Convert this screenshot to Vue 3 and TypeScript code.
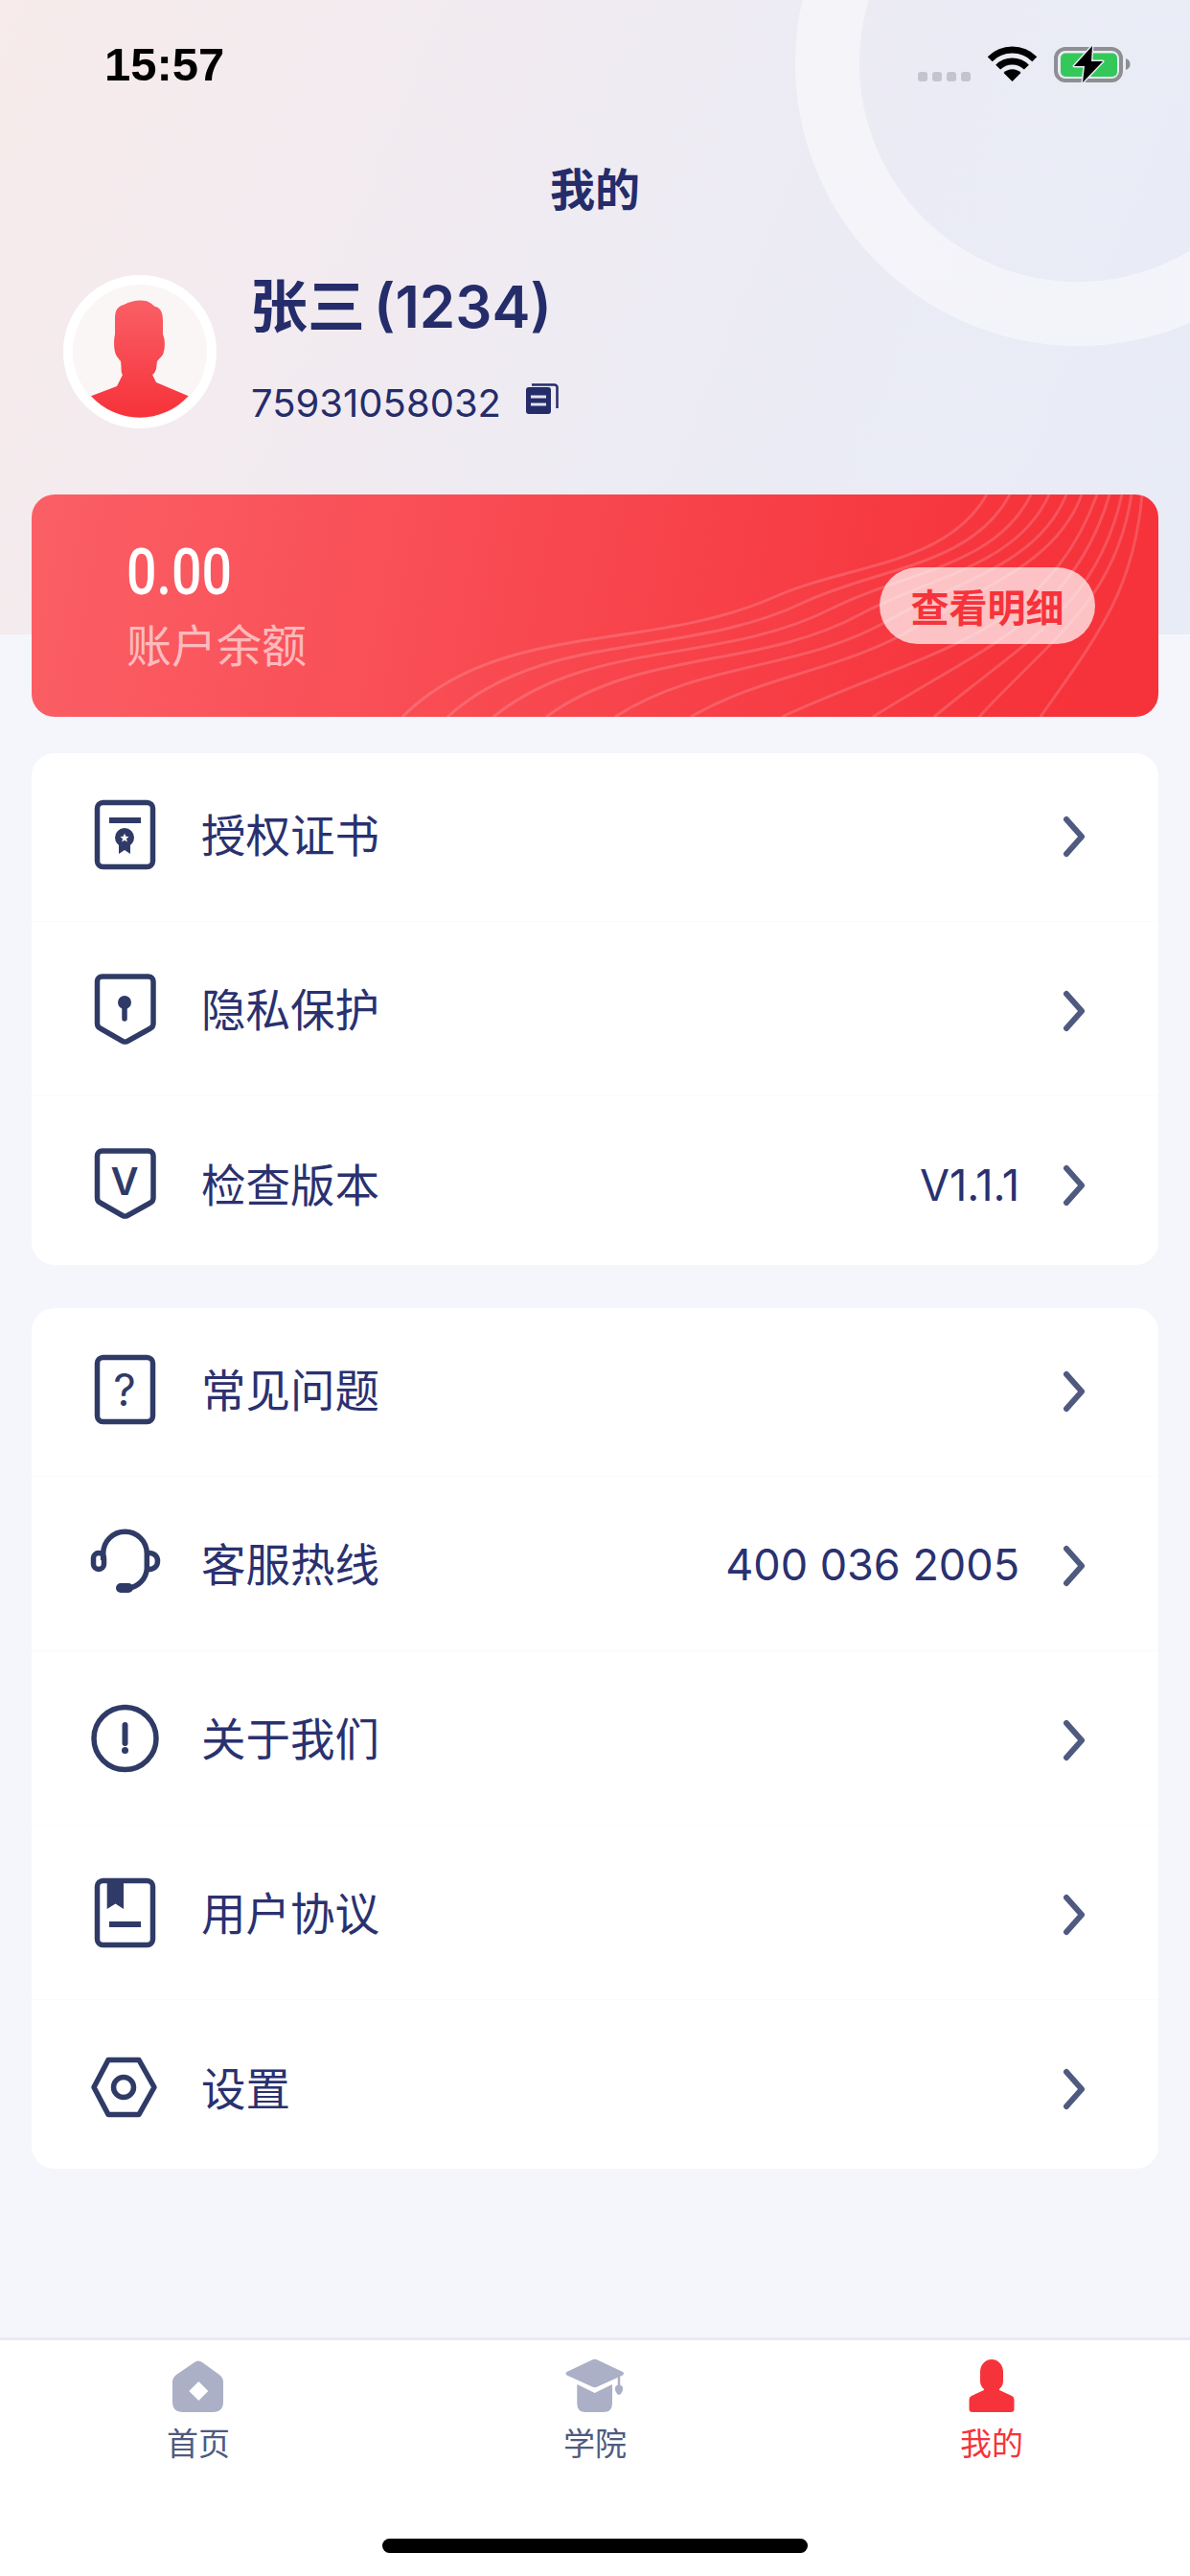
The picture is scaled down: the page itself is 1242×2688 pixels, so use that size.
<script setup lang="ts">
interface Row {
  icon: string;
  label: string;
  value?: string;
}

const groupOne: Row[] = [
  { icon: 'cert', label: '授权证书' },
  { icon: 'lock', label: '隐私保护' },
  { icon: 'version', label: '检查版本', value: 'V1.1.1' },
];

const groupTwo: Row[] = [
  { icon: 'faq', label: '常见问题' },
  { icon: 'phone', label: '客服热线', value: '400 036 2005' },
  { icon: 'about', label: '关于我们' },
  { icon: 'book', label: '用户协议' },
  { icon: 'gear', label: '设置' },
];

const groups = [groupOne, groupTwo];

// contour lines on the balance card, bottom edge to top edge
const bottoms = [387, 434, 482, 537, 609, 688, 783, 878, 942, 989, 1053];
const tops = [997, 1021, 1043, 1062, 1080, 1096, 1112, 1125, 1138, 1148, 1159];

function step(x: number, y: number, deg: number, len: number) {
  const a = (deg * Math.PI) / 180;
  return `${(x + Math.cos(a) * len).toFixed(1)} ${(y - Math.sin(a) * len).toFixed(1)}`;
}

const waves = bottoms.map((b, i) => {
  const t = tops[i];
  if (i > 5) {
    // the right-hand lines are plain arcs
    const len = Math.hypot(t - b, 232) * 0.4;
    return `M${b} 232 C${step(b, 232, 25 + 7.5 * (i - 6), len)} ${step(t, 0, 70 + 3.75 * (i - 6), -len)} ${t} 0`;
  }
  const mx = 775 + 30 * i;
  const my = 107 + 6 * i;
  const l1 = Math.hypot(mx - b, 232 - my) * 0.35;
  const l2 = Math.hypot(t - mx, my) * 0.35;
  const mid = 24 + 1.5 * i;
  return `M${b} 232 C${step(b, 232, 45 - 3 * i, l1)} ${step(mx, my, mid, -l1)} ${mx} ${my} C${step(mx, my, mid, l2)} ${step(t, 0, 60 + 2 * i, -l2)} ${t} 0`;
});
</script>

<template>
  <div class="page">
    <header class="head">
      <div class="ring"></div>
      <div class="status">
        <span class="time">15:57</span>
        <svg class="status-icons" width="222" height="40" viewBox="0 0 222 40">
          <g fill="#c3c4d0">
            <rect x="0" y="28" width="10" height="10" rx="3" />
            <rect x="15" y="28" width="10" height="10" rx="3" />
            <rect x="30" y="28" width="10" height="10" rx="3" />
            <rect x="45" y="28" width="10" height="10" rx="3" />
          </g>
          <g fill="none" stroke="#000" stroke-width="7">
            <path d="M75.2 14.7A33 33 0 0 1 121.8 14.7" />
            <path d="M83.65 23.15A21 21 0 0 1 113.35 23.15" />
          </g>
          <path d="M98.5 38L89.5 29A12.7 12.7 0 0 1 107.5 29Z" fill="#000" />
          <rect x="144" y="4" width="68" height="33" rx="10" fill="none" stroke="#8e8e93" stroke-width="4" />
          <rect x="149" y="8.5" width="59" height="24.5" rx="5" fill="#34c85a" />
          <path d="M217 14C220 15 221.5 17 221.5 20C221.5 23 220 25 217 26Z" fill="#8e8e93" />
          <path d="M182 1L163 22H174L172 39L193 17H181Z" fill="#000" stroke="#e8ebf6" stroke-width="3" paint-order="stroke" stroke-linejoin="round" />
        </svg>
      </div>
      <div class="title">我的</div>
      <div class="profile">
        <div class="avatar">
          <svg width="160" height="160" viewBox="0 0 160 160">
            <defs>
              <linearGradient id="avatarFill" x1="0" y1="0" x2="0" y2="1">
                <stop offset="0" stop-color="#fa5f66" />
                <stop offset="1" stop-color="#f6323a" />
              </linearGradient>
            </defs>
            <path
              d="M80 26.5C88 26 91 29 96 33C102 34 104 40 104 48V62C106 66 106.500 74 105 80C104 85 100 87 98 90L97 98C96 101 95 103 93 104L97 112L130.700 126.300A69 69 0 0 1 29 126.300L56 116L62 104C60 102 61 98 60 90C58 87 55 85 54 80C52.500 74 53 66 54 62V45C54 36 57 33 63 31C69 28 74 26.500 80 26.500Z"
              fill="url(#avatarFill)"
            />
          </svg>
        </div>
        <div class="info">
          <div class="name">张三 (1234)</div>
          <div class="uid">
            <span>75931058032</span>
            <svg width="34" height="32" viewBox="0 0 34 32">
              <rect x="0" y="4" width="26" height="28" rx="3" fill="#252c6a" />
              <path d="M5 14H21M5 22H21" stroke="#e4e4f0" stroke-width="3" />
              <path d="M6 1.500H29A3 3 0 0 1 32.500 5V26" fill="none" stroke="#252c6a" stroke-width="2.500" />
            </svg>
          </div>
        </div>
      </div>
    </header>

    <main class="main">
      <section class="balance">
        <svg class="waves" width="1176" height="232" viewBox="0 0 1176 232">
          <path v-for="(d, i) in waves" :key="i" :d="d" />
        </svg>
        <div class="money">
          <div class="amount">0.00</div>
          <div class="money-label">账户余额</div>
        </div>
        <button class="detail">查看明细</button>
      </section>

      <section v-for="(group, g) in groups" :key="g" class="list">
        <div v-for="row in group" :key="row.label" class="row">
          <svg class="row-icon" width="84" height="84" viewBox="0 0 84 84">
            <template v-if="row.icon === 'cert'">
              <rect class="line" x="12.500" y="8.500" width="58" height="67" rx="6" />
              <rect class="solid" x="25" y="24" width="33" height="6" />
              <circle class="solid" cx="41" cy="45" r="10" />
              <path class="solid" d="M35 48V62L41 58L47 62V48Z" />
              <path d="M41 40.500L42.300 43.700L45.500 44L43 46.200L43.800 49.500L41 47.700L38.200 49.500L39 46.200L36.500 44L39.700 43.700Z" fill="#fff" />
            </template>
            <template v-else-if="row.icon === 'lock'">
              <path class="line" d="M12.500 13A5 5 0 0 1 17.500 8H66A5 5 0 0 1 71 13V57A6 6 0 0 1 67.700 62.300L44 75.500A6 6 0 0 1 39 75.500L16 62.300A6 6 0 0 1 12.500 57Z" />
              <circle class="solid" cx="41" cy="35" r="7" />
              <path class="line" d="M41 36V52" stroke-linecap="round" />
            </template>
            <template v-else-if="row.icon === 'version'">
              <path class="line" d="M12.500 13A5 5 0 0 1 17.500 8H66A5 5 0 0 1 71 13V57A6 6 0 0 1 67.700 62.300L44 75.500A6 6 0 0 1 39 75.500L16 62.300A6 6 0 0 1 12.500 57Z" />
              <text class="glyph-v" x="41" y="54" text-anchor="middle">V</text>
            </template>
            <template v-else-if="row.icon === 'faq'">
              <rect class="line" x="12.500" y="8.500" width="58" height="67" rx="6" />
              <text class="glyph-q" x="41" y="59" text-anchor="middle">?</text>
            </template>
            <template v-else-if="row.icon === 'phone'">
              <path class="line" d="M18.700 38V31A22.800 22.800 0 0 1 64.300 31V47A22 22 0 0 1 46 67" />
              <path d="M37 67H45" fill="none" stroke="#2f3b66" stroke-width="10" stroke-linecap="round" />
              <rect class="line" x="8.500" y="30.500" width="11" height="17" rx="5.500" />
              <path class="line" d="M66 30.500C72 30.500 75.500 34 75.500 39C75.500 44 72 47.500 66 47.500" />
            </template>
            <template v-else-if="row.icon === 'about'">
              <circle class="line" cx="41.500" cy="42" r="32.500" />
              <path d="M41.500 28V47" fill="none" stroke="#2f3b66" stroke-width="6" stroke-linecap="round" />
              <circle class="solid" cx="41.500" cy="54.500" r="3.500" />
            </template>
            <template v-else-if="row.icon === 'book'">
              <rect class="line" x="12.500" y="8.500" width="58" height="67" rx="6" />
              <path class="solid" d="M22.700 9H40V38L31.500 32.500L22.700 38Z" />
              <rect class="solid" x="25" y="51" width="33" height="6" />
            </template>
            <template v-else>
              <path class="line" d="M9 42L24 13.500H56L72 42L56 70.500H24Z" stroke-linejoin="round" />
              <circle class="line" cx="40" cy="42" r="10.500" />
            </template>
          </svg>
          <span class="label">{{ row.label }}</span>
          <span v-if="row.value" class="value">{{ row.value }}</span>
          <svg class="chevron" width="24" height="44" viewBox="0 0 24 44">
            <path d="M4 4L20 22L4 40" />
          </svg>
        </div>
      </section>
    </main>

    <nav class="tabbar">
      <div class="tab">
        <svg width="70" height="60" viewBox="-5 0 70 60">
          <path d="M26 5Q30 2 34 5L52 18Q56 21 56 26V46Q56 57 45 57H14Q3 57 3 46V26Q3 21 7 18Z" fill="#abb0c6" />
          <path d="M30.300 25L40.300 35L30.300 45L20.300 35Z" fill="#fff" />
        </svg>
        <span>首页</span>
      </div>
      <div class="tab">
        <svg width="70" height="60" viewBox="-5 0 70 60">
          <path d="M27 2.500Q29.700 1 32.500 2.500L59 15Q61 16.700 59 18.500L32.500 30.500Q29.700 32 27 30.500L0.500 18.500Q-1.500 16.700 0.500 15Z" fill="#abb0c6" />
          <path d="M11.300 28L29.700 37L48 28V48Q48 57 39 57H20Q11.300 57 11.300 48Z" fill="#abb0c6" />
          <path d="M55 19V30" stroke="#abb0c6" stroke-width="2.500" />
          <path d="M55 28.500C58 28.500 59.500 31 59 33.500C58.500 36 56.500 39 55 39C53.500 39 51.500 36 51 33.500C50.500 31 52 28.500 55 28.500Z" fill="#abb0c6" />
        </svg>
        <span>学院</span>
      </div>
      <div class="tab active">
        <svg width="70" height="60" viewBox="-5 0 70 60">
          <path d="M30 2C37 2 42 8 42 15V24C42 29 40 31 38 33V34L51 40Q53.500 41 53.500 44V54Q53.500 57 50 57H10Q6.500 57 6.500 54V44Q6.500 41 9 40L22 34V33C20 31 18 29 18 24V15C18 8 23 2 30 2Z" fill="#f6333b" />
        </svg>
        <span>我的</span>
      </div>
      <div class="home-bar"></div>
    </nav>
  </div>
</template>

<style>
html,
body {
  margin: 0;
  background: #f5f6fb;
}
</style>

<style scoped>
.page {
  width: 1242px;
  height: 2688px;
  display: flex;
  flex-direction: column;
  background: #f5f6fb;
  color: #252c6a;
  font-family: "Noto Sans CJK SC", "Noto Sans", sans-serif;
  overflow: hidden;
}
.head {
  position: relative;
  height: 662px;
  flex-shrink: 0;
  overflow: hidden;
  background: linear-gradient(112deg, #f7ebeb 0%, #f2ebf0 30%, #eaebf5 70%, #e8ecf7 100%);
}
.ring {
  position: absolute;
  left: 830px;
  top: -229px;
  width: 590px;
  height: 590px;
  box-sizing: border-box;
  border: 67px solid rgba(255, 255, 255, 0.47);
  border-radius: 50%;
}
.status {
  position: relative;
  height: 136px;
  display: flex;
  justify-content: space-between;
  align-items: center;
  padding: 0 62px 2px 109px;
  box-sizing: border-box;
}
.time {
  font-family: "Liberation Sans", sans-serif;
  font-weight: 700;
  font-size: 49px;
  color: #000;
}
.title {
  position: relative;
  height: 124px;
  line-height: 118px;
  text-align: center;
  font-size: 47px;
  font-weight: 700;
}
.profile {
  position: relative;
  display: flex;
  gap: 36px;
  margin-top: 27px;
  padding-left: 66px;
}
.avatar {
  width: 160px;
  height: 160px;
  box-sizing: border-box;
  border-radius: 50%;
  background: #faf6f6;
  box-shadow: inset 0 0 0 10px #fff;
}
.name {
  height: 70px;
  line-height: 66px;
  margin-left: -1px;
  font-family: Inter, "Noto Sans CJK SC", sans-serif;
  font-size: 60px;
  font-weight: 600;
  word-spacing: -6px;
  white-space: nowrap;
}
.uid {
  display: flex;
  align-items: center;
  gap: 26px;
  height: 60px;
  margin-top: 33px;
  font-family: Inter, sans-serif;
  font-size: 40px;
}
.uid svg {
  margin-top: -8px;
}
.main {
  flex: 1;
  padding: 0 33px;
}
.balance {
  position: relative;
  display: flex;
  justify-content: space-between;
  align-items: center;
  height: 232px;
  margin-top: -146px;
  padding: 0 66px 0 99px;
  box-sizing: border-box;
  border-radius: 24px;
  background: linear-gradient(100deg, #fb5f66 0%, #f6343c 85%, #f6323a 100%);
  overflow: hidden;
}
.waves {
  position: absolute;
  left: 0;
  top: 0;
  fill: none;
  stroke: rgba(255, 255, 255, 0.16);
  stroke-width: 3;
}
.money {
  position: relative;
  height: 232px;
}
.amount {
  height: 70px;
  line-height: 70px;
  margin-top: 47px;
  color: #fff;
  font-family: Roboto, sans-serif;
  font-size: 66px;
  font-weight: 500;
  transform: scaleX(0.84);
  transform-origin: left center;
}
.money-label {
  height: 60px;
  line-height: 54px;
  margin-top: 11px;
  font-size: 47px;
  color: rgba(255, 255, 255, 0.6);
}
.detail {
  position: relative;
  width: 225px;
  height: 80px;
  padding: 0;
  border: none;
  border-radius: 40px;
  background: rgba(255, 255, 255, 0.7);
  color: #f6333b;
  font-family: inherit;
  font-size: 40px;
  font-weight: 700;
}
.list {
  display: flow-root;
  margin-top: 38px;
  border-radius: 24px;
  background: #fff;
}
.list + .list {
  margin-top: 45px;
}
.row {
  display: flex;
  align-items: center;
  height: 182px;
  padding: 0 76px 0 56px;
  box-sizing: border-box;
  border-bottom: 1px solid #fbfbfc;
}
.row:first-child {
  margin-top: -6px;
}
.row:last-child {
  margin-bottom: -6px;
  border-bottom: none;
}
.row-icon {
  flex-shrink: 0;
  fill: none;
}
.row-icon .line {
  fill: none;
  stroke: #2f3b66;
  stroke-width: 5.5;
}
.row-icon .solid {
  fill: #2f3b66;
}
.glyph-v {
  fill: #2f3b66;
  font-family: Inter, sans-serif;
  font-size: 40px;
  font-weight: 600;
}
.glyph-q {
  fill: #2f3b66;
  font-family: Inter, sans-serif;
  font-size: 46px;
}
.label {
  flex: 1;
  margin-left: 37px;
  padding-bottom: 4px;
  font-size: 46.5px;
  color: #2a3170;
}
.value {
  margin-right: 45px;
  margin-top: 2px;
  font-family: Inter, sans-serif;
  font-size: 45px;
  color: #2a3170;
}
.chevron {
  flex-shrink: 0;
  margin-top: 4px;
  fill: none;
  stroke: #4f5a80;
  stroke-width: 6;
  stroke-linecap: round;
  stroke-linejoin: round;
}
.tabbar {
  position: relative;
  display: grid;
  grid-template-columns: repeat(3, 1fr);
  align-items: start;
  height: 249px;
  box-sizing: border-box;
  padding-top: 18px;
  border-top: 3px solid #e9eaf3;
  background: #fff;
  flex-shrink: 0;
}
.tab {
  display: flex;
  flex-direction: column;
  align-items: center;
  gap: 5px;
  font-size: 33px;
  line-height: 46px;
  color: #4f5a80;
}
.tab.active {
  color: #f6333b;
}
.home-bar {
  position: absolute;
  left: 399px;
  top: 207px;
  width: 444px;
  height: 15px;
  border-radius: 8px;
  background: #000;
}
</style>
